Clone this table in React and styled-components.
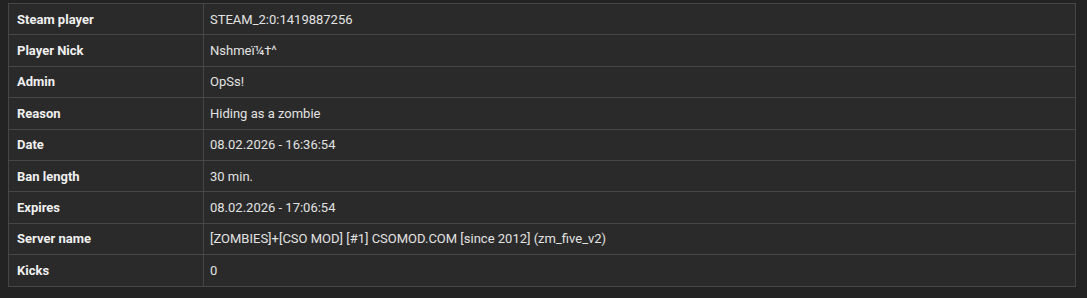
import React from 'react'
import styled, { createGlobalStyle } from 'styled-components'

const GlobalStyle = createGlobalStyle`
  html, body {
    margin: 0;
    padding: 0;
    background: #232323;
  }
  body {
    font-family: Roboto, 'Noto Sans', sans-serif;
  }
`

const Container = styled.div`
  padding: 3px 11px 0 8px;
  height: 298px;
  box-sizing: border-box;
`

const Table = styled.table`
  width: 100%;
  border-collapse: collapse;
  background: #2a2a2a;
  border: 1px solid #464646;
`

const Row = styled.tr`
  border-bottom: 1px solid #464646;
  height: 31.4px;
`

const Label = styled.td`
  width: 178px;
  padding: 0 8px;
  border-right: 1px solid #464646;
  color: #f0f0f0;
  font-weight: 700;
  font-size: 13px;
  vertical-align: middle;
`

const Value = styled.td`
  padding: 0 6px;
  color: #e2e2e2;
  font-size: 13px;
  vertical-align: middle;
`

const rows = [
  ['Steam player', 'STEAM_2:0:1419887256'],
  ['Player Nick', 'Nshmeï¼†^'],
  ['Admin', 'OpSs!'],
  ['Reason', 'Hiding as a zombie'],
  ['Date', '08.02.2026 - 16:36:54'],
  ['Ban length', '30 min.'],
  ['Expires', '08.02.2026 - 17:06:54'],
  ['Server name', '[ZOMBIES]+[CSO MOD] [#1] CSOMOD.COM [since 2012] (zm_five_v2)'],
  ['Kicks', '0'],
]

const App = () => {
  return (
    <Container>
      <GlobalStyle />
      <Table>
        <tbody>
          {rows.map(([label, value]) => (
            <Row key={label}>
              <Label>{label}</Label>
              <Value>{value}</Value>
            </Row>
          ))}
        </tbody>
      </Table>
    </Container>
  )
}

export default App
